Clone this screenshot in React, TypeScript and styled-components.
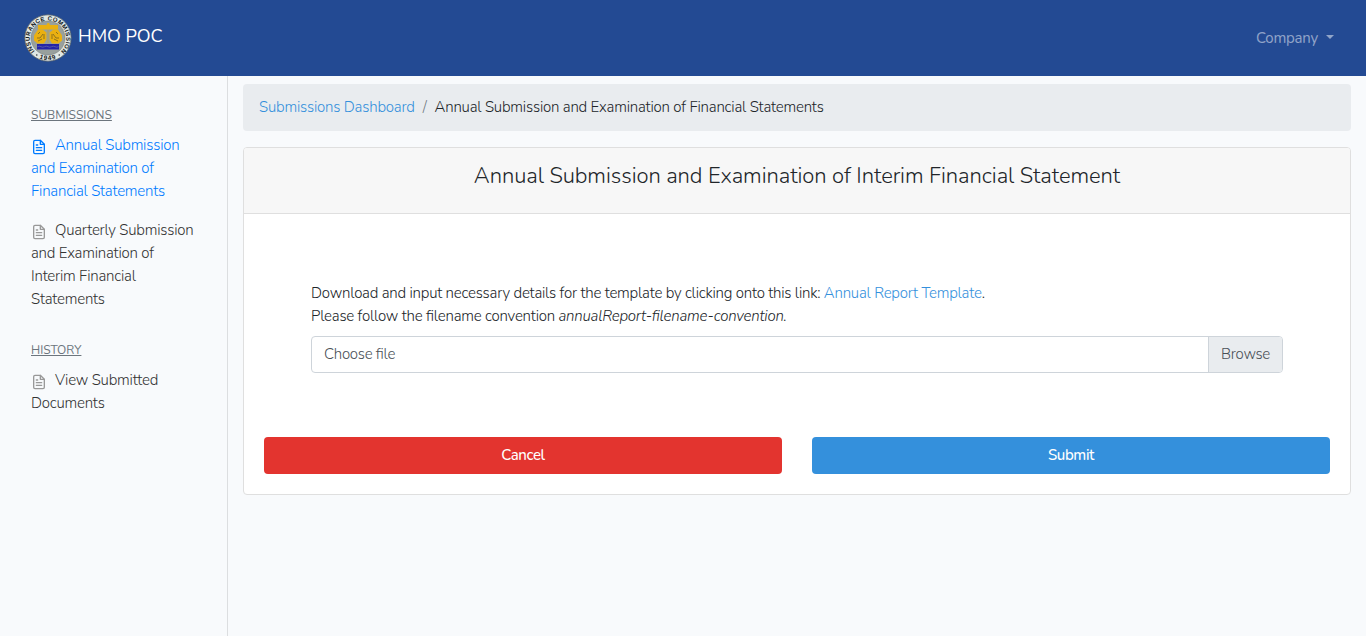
import React from 'react';
import styled, { createGlobalStyle } from 'styled-components';

const GlobalStyle = createGlobalStyle`
  *, *::before, *::after { box-sizing: border-box; }
  html, body { margin: 0; height: 100%; }
  body {
    background: #f8fafc;
    color: #212529;
    font-family: Nunito, Lato, sans-serif;
    font-size: 15px;
    font-weight: 365;
    font-feature-settings: "liga" 1;
    letter-spacing: -0.22px;
    line-height: 23px;
    overflow: hidden;
  }
`;

const Page = styled.div`
  display: flex;
  flex-direction: column;
  height: 100vh;
`;

const Navbar = styled.header`
  display: flex;
  flex: none;
  align-items: center;
  justify-content: space-between;
  height: 76px;
  padding: 0 32px 0 24px;
  background: #234a93;
`;

const Brand = styled.a`
  display: flex;
  align-items: center;
  gap: 6px;
  color: #fff;
  font-size: 18px;
  font-weight: 400;
  letter-spacing: 0;
`;

const BrandName = styled.span`
  padding-bottom: 4px;
`;

const UserMenu = styled.a`
  display: flex;
  align-items: center;
  gap: 8px;
  color: rgba(255, 255, 255, 0.5);
  font-weight: 400;
  letter-spacing: -0.22px;
`;

const Caret = styled.span`
  border: 4px solid transparent;
  border-top-color: currentColor;
  border-bottom: 0;
  margin-bottom: 2px;
`;

const Columns = styled.div`
  display: flex;
  flex: 1;
  min-height: 0;
`;

const Sidebar = styled.nav`
  flex: none;
  width: 228px;
  padding: 30px 31px 0;
  border-right: 1px solid #dcdee0;
`;

const SectionTitle = styled.h6<{ $first?: boolean }>`
  margin: ${p => (p.$first ? 0 : '30px')} 0 10px;
  color: #6c757d;
  font-size: 12px;
  font-weight: 400;
  letter-spacing: 0;
  line-height: 18px;
  text-decoration: underline;
  text-transform: uppercase;
`;

const SideLink = styled.a<{ $active?: boolean }>`
  display: block;
  margin-bottom: 16px;
  color: ${p => (p.$active ? '#007bff' : '#333')};
  white-space: nowrap;

  svg {
    width: 16px;
    height: 16px;
    margin-right: 8px;
    color: ${p => (p.$active ? '#007bff' : '#999')};
    vertical-align: text-bottom;
  }
`;

const Main = styled.main`
  flex: 1;
  min-width: 0;
  padding: 8px 15px 0;
`;

const Breadcrumb = styled.div`
  display: flex;
  gap: 8px;
  height: 47px;
  margin-bottom: 16px;
  padding: 12px 16px;
  border-radius: 4px;
  background: #e9ecef;
  letter-spacing: -0.205px;
`;

const Divider = styled.span`
  color: #6c757d;
`;

const Link = styled.a`
  color: #3490dc;
`;

const Card = styled.section`
  height: 348px;
  border: 1px solid #dfdfdf;
  border-radius: 4px;
  background: #fff;
`;

const CardHeader = styled.div`
  height: 66px;
  padding: 15px 20px 0;
  border-bottom: 1px solid #dfdfdf;
  border-radius: 3px 3px 0 0;
  background: #f7f7f7;
  text-align: center;
`;

const CardTitle = styled.h4`
  margin: 0;
  font-size: 22px;
  font-weight: 360;
  letter-spacing: -0.065px;
  line-height: 26px;
`;

const Instructions = styled.div`
  padding: 68px 67px 0;
`;

const Paragraph = styled.p`
  margin: 0 0 8px;
`;

const FileField = styled.div`
  display: flex;
  height: 37px;
  border: 1px solid #ced4da;
  border-radius: 4px;
  color: #495057;
  letter-spacing: -0.28px;
  line-height: 34px;
`;

const FileName = styled.span`
  flex: 1;
  padding-left: 12px;
`;

const BrowseButton = styled.span`
  width: 74px;
  border-left: 1px solid #ced4da;
  border-radius: 0 3px 3px 0;
  background: #e9ecef;
  text-align: center;
`;

const Actions = styled.div`
  display: grid;
  grid-template-columns: 1fr 1fr;
  gap: 30px;
  padding: 64px 20px 0;
`;

const Button = styled.button<{ $color: string }>`
  height: 37px;
  padding: 0 0 1px;
  border: 0;
  border-radius: 4px;
  background: ${p => p.$color};
  color: #fff;
  font: inherit;
  font-weight: 480;
  letter-spacing: -0.38px;
`;

const FileIcon = () => (
  <svg viewBox="0 0 24 24" fill="none" stroke="currentColor" strokeWidth="2" strokeLinecap="round" strokeLinejoin="round">
    <path d="M14 2H6a2 2 0 0 0-2 2v16a2 2 0 0 0 2 2h12a2 2 0 0 0 2-2V8z" />
    <polyline points="14 2 14 8 20 8" />
    <line x1="16" y1="13" x2="8" y2="13" />
    <line x1="16" y1="17" x2="8" y2="17" />
    <polyline points="10 9 9 9 8 9" />
  </svg>
);

const Seal = () => (
  <svg width="48" height="48" viewBox="0 0 48 48">
    <defs>
      <path id="sealTop" d="M10.800 37.200A18.200 18.200 0 1 1 37.200 37.200" />
      <path id="sealBottom" d="M12 42.600A22.200 22.200 0 0 0 36 42.600" />
    </defs>
    <circle cx="24" cy="24" r="23.2" fill="#dfe6e3" stroke="#59636b" strokeWidth="0.8" />
    <circle cx="24" cy="24" r="17" fill="#98a09d" stroke="#77807f" strokeWidth="0.6" />
    <g fontFamily="Liberation Sans" fontWeight="700" fill="#15191c">
      <text fontSize="6" letterSpacing="0.42">
        <textPath href="#sealTop">INSURANCE COMMISSION</textPath>
      </text>
      <text fontSize="6.4" textAnchor="middle" letterSpacing="0.9">
        <textPath href="#sealBottom" startOffset="50%">1949</textPath>
      </text>
    </g>
    <circle cx="12.800" cy="41" r="0.7" fill="#15191c" />
    <circle cx="35.200" cy="41" r="0.7" fill="#15191c" />
    <g fill="#eab010">
      <path d="M14 11h8.500l1-2h1.500l1 2H34v4.500H14z" />
      <path d="M14 15.500l-4 6v5l3.500 3h6.500l2.500-4v-7l-4-3z" />
      <path d="M34 15.500l4 6v5l-3.500 3H28l-2.500-4v-7l4-3z" />
    </g>
    <path d="M14 20l2-2m-3 6h3l3-4m-5 7 4-2m2-5v5m14-5-2-2m3 6h-3l-3-4m5 7-4-2m-2-5v5" fill="none" stroke="#8d731d" strokeWidth="1" />
    <path d="M23 16h2v13h-2z" fill="#a5a07b" />
    <path d="M13 30h22v5.500H13z" fill="#2424a8" />
    <path d="M13.500 32.700q1.700-1 3.500 0t3.500 0 3.500 0 3.500 0 3.500 0 3.500 0" fill="none" stroke="#6066a7" strokeWidth="0.8" />
  </svg>
);

export default function App() {
  return (
    <>
      <GlobalStyle />
      <Page>
        <Navbar>
          <Brand>
            <Seal />
            <BrandName>HMO POC</BrandName>
          </Brand>
          <UserMenu>Company<Caret /></UserMenu>
        </Navbar>
        <Columns>
          <Sidebar>
            <SectionTitle $first>Submissions</SectionTitle>
            <SideLink $active>
              <FileIcon />Annual Submission<br />
              and Examination of<br />
              Financial Statements
            </SideLink>
            <SideLink>
              <FileIcon />Quarterly Submission<br />
              and Examination of<br />
              Interim Financial<br />
              Statements
            </SideLink>
            <SectionTitle>History</SectionTitle>
            <SideLink>
              <FileIcon />View Submitted<br />
              Documents
            </SideLink>
          </Sidebar>
          <Main>
            <Breadcrumb>
              <Link>Submissions Dashboard</Link>
              <Divider>/</Divider>
              <span>Annual Submission and Examination of Financial Statements</span>
            </Breadcrumb>
            <Card>
              <CardHeader>
                <CardTitle>Annual Submission and Examination of Interim Financial Statement</CardTitle>
              </CardHeader>
              <Instructions>
                <Paragraph>
                  Download and input necessary details for the template by clicking onto this link:{' '}
                  <Link>Annual Report Template</Link>.<br />
                  Please follow the filename convention <em>annualReport-filename-convention.</em>
                </Paragraph>
                <FileField>
                  <FileName>Choose file</FileName>
                  <BrowseButton>Browse</BrowseButton>
                </FileField>
              </Instructions>
              <Actions>
                <Button $color="#e3342f">Cancel</Button>
                <Button $color="#3490dc">Submit</Button>
              </Actions>
            </Card>
          </Main>
        </Columns>
      </Page>
    </>
  );
}
